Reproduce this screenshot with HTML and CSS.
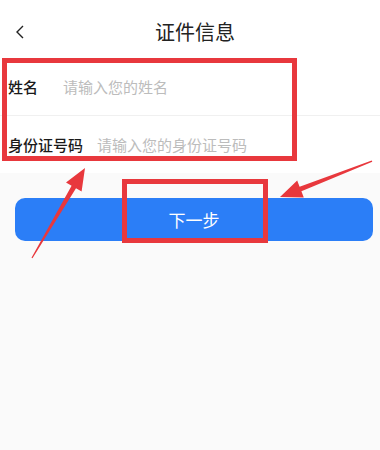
FILE: index.html
```html
<!DOCTYPE html>
<html lang="zh-CN">
<head>
  <meta charset="UTF-8" />
  <meta name="viewport" content="width=device-width, initial-scale=1.0"/>
  <title>证件信息</title>
  <link rel="stylesheet" href="styles.css">
</head>
<body>
  <div class="page">
    <header class="top-bar">
      <span class="back">
        <svg width="10" height="14" viewBox="0 0 10 14"><polyline points="8,1 2,7 8,13" fill="none" stroke="#222" stroke-width="1.4"/></svg>
      </span>
      <h1 class="title">证件信息</h1>
    </header>

    <div class="form">
      <div class="row">
        <span class="label">姓名</span>
        <span class="placeholder">请输入您的姓名</span>
      </div>
      <div class="row">
        <span class="label">身份证号码</span>
        <span class="placeholder">请输入您的身份证号码</span>
      </div>
    </div>

    <div class="actions">
      <button class="next-button">下一步</button>
    </div>

    <!-- annotation marks -->
    <div class="mark mark-form"></div>
    <div class="mark mark-button"></div>
    <svg class="arrows" width="380" height="450" viewBox="0 0 380 450">
      <polygon fill="#e8383d" points="32.5,258.3 76,188.3 81.6,191.6 85,168 66,182.4 71.6,185.7 31.5,257.7"/>
      <polygon fill="#e8383d" points="372.3,161.8 301.4,191.3 303.8,197.4 280,197 297.2,180.6 299.6,186.7 371.7,160.4"/>
    </svg>
  </div>
</body>
</html>
```

FILE: styles.css
```css
body {
  margin: 0;
  background: #fafafa;
  font-family: "Noto Sans CJK SC", "Noto Sans", sans-serif;
}

.page {
  position: relative;
  min-height: 450px;
}

.top-bar {
  height: 58px;
  background: #fff;
  display: flex;
  align-items: center;
  justify-content: center;
  position: relative;
  padding-top: 5px;
  box-sizing: border-box;
}

.back {
  position: absolute;
  left: 15px;
  top: 25px;
  display: flex;
}

.title {
  margin: 0;
  font-size: 20px;
  font-weight: normal;
  color: #222;
  padding-left: 10px;
}

.form {
  background: #fff;
}

.row {
  height: 57px;
  display: flex;
  align-items: center;
  padding-left: 8px;
  font-size: 15px;
}

.row + .row {
  border-top: 1px solid #f0f0f0;
}

.label {
  min-width: 41px;
  margin-right: 14px;
  color: #1a1a1a;
  font-weight: 500;
}

.placeholder {
  color: #bcbcbc;
}

.actions {
  padding: 25px 7px 0 15px;
}

.next-button {
  width: 100%;
  height: 43px;
  border: none;
  border-radius: 10px;
  background: #2b7ef7;
  color: #fff;
  font-family: inherit;
  font-size: 17px;
}

.mark {
  position: absolute;
  border: 5px solid #e8383d;
  box-sizing: border-box;
  pointer-events: none;
}

.mark-form {
  left: 2px;
  top: 58px;
  width: 295px;
  height: 103px;
}

.mark-button {
  left: 122px;
  top: 179px;
  width: 146px;
  height: 64px;
}

.arrows {
  position: absolute;
  left: 0;
  top: 0;
  pointer-events: none;
}
```
